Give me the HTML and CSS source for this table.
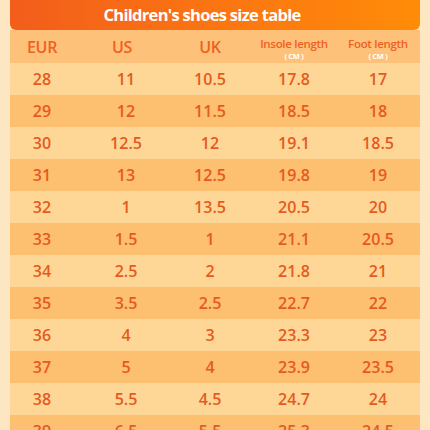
FILE: index.html
```html
<!DOCTYPE html>
<html lang="en">
<head>
  <meta charset="UTF-8">
  <title>Children's shoes size table</title>
  <link rel="stylesheet" href="styles.css">
</head>
<body>
  <div class="table">
    <div class="title">Children's shoes size table</div>

    <div class="row head">
      <div>EUR</div>
      <div>US</div>
      <div>UK</div>
      <div class="small">Insole length<span>( CM )</span></div>
      <div class="small">Foot length<span>( CM )</span></div>
    </div>

    <div class="row"><div>28</div><div>11</div><div>10.5</div><div>17.8</div><div>17</div></div>
    <div class="row"><div>29</div><div>12</div><div>11.5</div><div>18.5</div><div>18</div></div>
    <div class="row"><div>30</div><div>12.5</div><div>12</div><div>19.1</div><div>18.5</div></div>
    <div class="row"><div>31</div><div>13</div><div>12.5</div><div>19.8</div><div>19</div></div>
    <div class="row"><div>32</div><div>1</div><div>13.5</div><div>20.5</div><div>20</div></div>
    <div class="row"><div>33</div><div>1.5</div><div>1</div><div>21.1</div><div>20.5</div></div>
    <div class="row"><div>34</div><div>2.5</div><div>2</div><div>21.8</div><div>21</div></div>
    <div class="row"><div>35</div><div>3.5</div><div>2.5</div><div>22.7</div><div>22</div></div>
    <div class="row"><div>36</div><div>4</div><div>3</div><div>23.3</div><div>23</div></div>
    <div class="row"><div>37</div><div>5</div><div>4</div><div>23.9</div><div>23.5</div></div>
    <div class="row"><div>38</div><div>5.5</div><div>4.5</div><div>24.7</div><div>24</div></div>
    <div class="row"><div>39</div><div>6.5</div><div>5.5</div><div>25.3</div><div>24.5</div></div>
  </div>
</body>
</html>
```

FILE: styles.css
```css
* {
  box-sizing: border-box;
}

body {
  margin: 0;
  height: 430px;
  overflow: hidden;
  background: #fde7c3;
  font-family: 'Open Sans', sans-serif;
  color: #e65a1f;
}

.table {
  margin: 0 10px;
  width: 410px;
}

.title {
  height: 30px;
  line-height: 30px;
  text-align: center;
  color: #fff;
  font-size: 16.5px;
  font-weight: 700;
  letter-spacing: -0.7px;
  padding-right: 26px;
  background: linear-gradient(to right, #f25d1b, #fb7512 50%, #ff8c08);
  border-radius: 0 0 6px 6px;
}

.row {
  display: grid;
  grid-template-columns: 74px repeat(4, 84px);
  align-items: center;
  height: 32px;
  font-size: 16px;
  font-weight: 600;
  text-align: center;
}

.row > div:first-child {
  padding-right: 10px;
}

.row:nth-child(odd) {
  background: #fed797;
}

.row:nth-child(even) {
  background: #fdbf70;
}

.row.head {
  height: 33px;
  background: #fdc17a;
  font-size: 16px;
  color: #f0601e;
  letter-spacing: -0.3px;
}

.row.head > div:nth-child(2) {
  padding-right: 8px;
}

.head .small {
  font-size: 11.5px;
  line-height: 16px;
  display: flex;
  flex-direction: column;
  align-items: center;
  padding-top: 3px;
}

.head .small span {
  color: #fff;
  font-size: 7.5px;
  font-weight: 700;
  line-height: 9px;
}
```
